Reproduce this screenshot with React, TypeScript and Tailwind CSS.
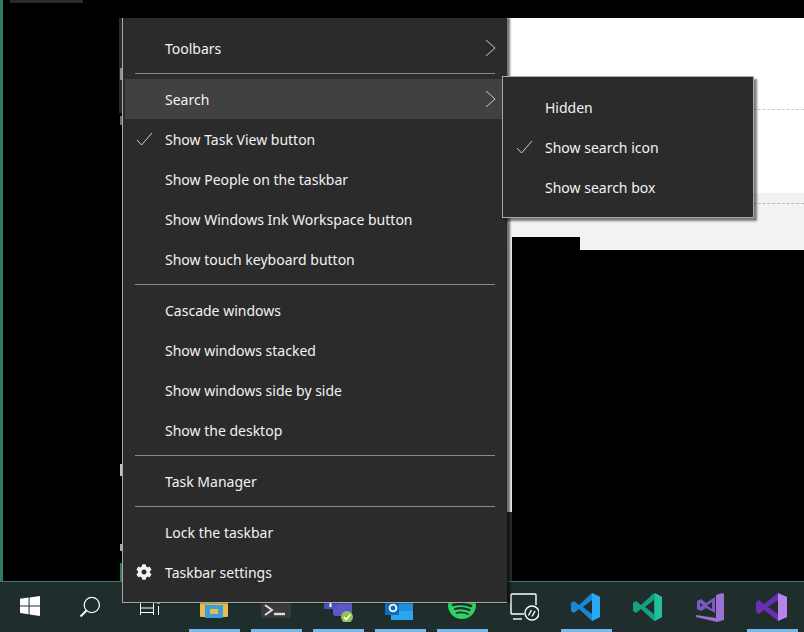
import { FaCog } from 'react-icons/fa';

const font = { fontFamily: '"Noto Sans", "Open Sans", sans-serif' };

interface RowProps {
  label: string;
  checked?: boolean;
  gear?: boolean;
  arrow?: boolean;
  active?: boolean;
}

const Row = ({ label, checked, gear, arrow, active }: RowProps) => (
  <div className={`flex h-10 items-center pr-[11px] text-[14px] text-[#f2f2f2] ${active ? 'ml-[2px] bg-[#414141] pl-[11px]' : 'pl-[13px]'}`}>
    <div className="flex w-[29px] items-center">
      {checked && (
        <svg width="17" height="14" viewBox="0 0 17 14" fill="none" stroke="#d0d0d0" strokeWidth="1">
          <path d="M1 8 5.5 13 16 1" />
        </svg>
      )}
      {gear && <FaCog size={16} className="text-[#f2f2f2]" />}
    </div>
    <span className="flex-1">{label}</span>
    {arrow && (
      <svg width="11" height="18" viewBox="0 0 11 18" fill="none" stroke="#cccccc" strokeWidth="1">
        <path d="M1 1 10 9 1 17" />
      </svg>
    )}
  </div>
);

const Sep = () => <div className="mx-[12px] my-[5px] h-px bg-[#8a8a8a]" />;

const TaskSlot = ({ children, bar, left = false }: { children?: React.ReactNode; bar?: boolean; left?: boolean }) => (
  <div className={`relative flex h-full items-center justify-center ${left ? 'w-[60px]' : 'w-[62px]'}`}>
    {children}
    {bar && <div className="absolute bottom-0 left-[6px] right-[5px] h-[3px] bg-[#76b9ed]" />}
  </div>
);

export default function App() {
  return (
    <div className="relative flex h-[632px] w-[804px] flex-col overflow-hidden bg-black" style={font}>
      <div className="flex h-[581px] flex-none">
        <div className="flex w-[507px] flex-none">
          <div className="w-[3px] bg-[#2f7a68]" />
          <div className="flex-1">
            <div className="ml-[7px] h-[3px] w-[73px] bg-[#2a2a2a]" />
          </div>
        </div>
        <div className="flex-1">
          <div className="h-[18px] bg-black" />
          <div className="h-[175px] bg-white pt-[91px]">
            <div className="ml-[246px] border-t border-dashed border-[#cccccc]" />
          </div>
          <div className="h-[57px] bg-[#f2f2f2] pt-[10px]">
            <div className="ml-[246px] border-t border-dashed border-[#bbbbbb]" />
            <div className="ml-[5px] mt-[33px] h-[13px] w-[68px] bg-black" />
          </div>
          <div className="h-[262px] border-l-[5px] border-[#eeeeee] bg-black" />
          <div className="h-[69px] border-l-[5px] border-[#2a2a2a] bg-black" />
        </div>
      </div>

      <div className="h-px flex-none bg-[#3f7a6a]" />

      <div className="flex h-[50px] flex-none items-center bg-[#1f2e2d]">
        <TaskSlot left>
          <svg width="20" height="20" viewBox="0 0 20 20" className="-mt-[2px]">
            <path d="M0 2.8 8.6 1.6V9.4H0Z M9.6 1.4 20 0V9.4H9.6Z M0 10.4H8.6V18.3L0 17.1Z M9.6 10.4H20V20L9.6 18.5Z" fill="#fff" />
          </svg>
        </TaskSlot>
        <TaskSlot left>
          <svg width="22" height="22" viewBox="0 0 22 22" fill="none" stroke="#fff">
            <circle cx="12.8" cy="9" r="7.6" strokeWidth="1.2" />
            <path d="M7.5 14.5 1.5 20.5" strokeWidth="1.8" />
          </svg>
        </TaskSlot>
        <div className="flex h-full w-[63px] items-center pl-[20px]">
          <svg width="20" height="14" viewBox="0 0 20 14" fill="none" stroke="#fff" className="mt-[1px]">
            <path d="M0.5 0v14M13.5 0v14M0.5 7H13.5M0.5 11.5H13.5M18.5 5v9" strokeWidth="1" />
            <rect x="17" y="0" width="3" height="3" fill="#bbb" stroke="none" />
          </svg>
        </div>
        <TaskSlot bar>
          <svg width="28" height="18" viewBox="0 0 28 18" className="mt-[4px]">
            <rect width="28" height="17" rx="1" fill="#e9bd4c" />
            <rect x="5" y="5" width="18" height="13" fill="#3b9fdc" />
            <rect x="10" y="9" width="8" height="5" fill="#e9bd4c" />
          </svg>
        </TaskSlot>
        <TaskSlot bar>
          <div className="mt-[3px] flex h-[18px] w-[30px] items-end rounded-[2px] bg-[#3a3a3a] pb-[2px] pl-[3px]">
            <svg width="22" height="12" viewBox="0 0 22 12" fill="none" stroke="#ddd">
              <path d="M1 1 8 6 1 11" strokeWidth="2" />
              <path d="M10 10H21" strokeWidth="2.4" />
            </svg>
          </div>
        </TaskSlot>
        <TaskSlot bar>
          <svg width="30" height="30" viewBox="0 0 30 30">
            <rect x="10" y="6" width="19" height="18" rx="3" fill="#5f56c8" />
            <rect x="1" y="2" width="13" height="15" rx="1" fill="#4b53bc" />
            <path d="M4 8H11M7.5 8V15" stroke="#fff" strokeWidth="2" />
            <circle cx="24" cy="25" r="6" fill="#92c353" />
            <path d="M21 25 23.2 27.5 27.5 22.5" stroke="#fff" strokeWidth="1.5" fill="none" />
          </svg>
        </TaskSlot>
        <TaskSlot bar>
          <svg width="30" height="28" viewBox="0 0 30 28">
            <rect x="6" y="2" width="22" height="25" rx="1" fill="#1f8fe0" />
            <rect x="6" y="18" width="22" height="9" fill="#2ba6ee" />
            <rect x="0" y="8" width="14" height="14" rx="1" fill="#0f6cbd" />
            <circle cx="8" cy="15" r="3.4" fill="none" stroke="#fff" strokeWidth="1.8" />
          </svg>
        </TaskSlot>
        <TaskSlot bar>
          <svg width="28" height="28" viewBox="0 0 28 28" fill="none" stroke="#1f2e2d" strokeLinecap="round" className="-mt-[4px]">
            <circle cx="14" cy="14" r="14" fill="#2ed463" stroke="none" />
            <path d="M5 14Q14 11.5 23 15" strokeWidth="2.6" />
            <path d="M7 18Q14 16 21.5 19" strokeWidth="2.2" />
            <path d="M8.5 22Q14 20.5 20 23" strokeWidth="1.8" />
          </svg>
        </TaskSlot>
        <TaskSlot>
          <svg width="30" height="28" viewBox="0 0 30 28" fill="none" stroke="#fff" strokeWidth="1.4">
            <path d="M15 21H3a1 1 0 0 1-1-1V2a1 1 0 0 1 1-1h23a1 1 0 0 1 1 1v10" />
            <path d="M4 26h9" />
            <circle cx="23" cy="20" r="7" fill="#1f2e2d" />
            <path d="M19.5 22.5l3-5.5M23 23.5l3-5.5" strokeWidth="1.4" />
          </svg>
        </TaskSlot>
        <TaskSlot bar>
          <svg width="30" height="30" viewBox="0 0 30 30">
            <path d="M21 1 29 5V25L21 29 8 17 3 21 0 19V11L3 9 8 13ZM21 8 12 15 21 22Z" fill="#1a86d6" fillRule="evenodd" />
            <path d="M21 1 29 5V25L21 29Z" fill="#2aa8f2" />
          </svg>
          <div className="absolute bottom-0 left-[46px] right-[5px] h-[3px] bg-[#5b8aaa]" />
        </TaskSlot>
        <TaskSlot>
          <svg width="30" height="30" viewBox="0 0 30 30">
            <path d="M21 1 29 5V25L21 29 8 17 3 21 0 19V11L3 9 8 13ZM21 8 12 15 21 22Z" fill="#14a083" fillRule="evenodd" />
            <path d="M22 1 29 5V25L22 29Z" fill="#22c09b" />
          </svg>
        </TaskSlot>
        <TaskSlot>
          <svg width="30" height="30" viewBox="0 0 30 30">
            <path d="M2 9 6 7 11 11 20 5V21L11 16 6 19 2 17ZM5 11V15L8 13ZM12 13.5 17 17V10Z" fill="#7e57c2" fillRule="evenodd" />
            <path d="M21 3 27 1 29 2V28L22 30 1 25V23L21 26Z" fill="#9a72d6" />
          </svg>
        </TaskSlot>
        <TaskSlot bar>
          <svg width="32" height="30" viewBox="0 0 32 30">
            <path d="M22 1 31 5V25L22 29 8 18 3 22 0 20V10L3 8 8 12ZM22 8 12 15 22 22Z" fill="#6a2fb0" fillRule="evenodd" />
            <path d="M22 1 31 5V25L22 29Z" fill="#b684ea" />
          </svg>
        </TaskSlot>
      </div>

      {/* remains of the window behind the menu */}
      <div className="absolute left-[119px] top-[18px] h-[95px] w-[3px] bg-[#2a2a2a]" />
      <div className="absolute left-[120px] top-[68px] h-[12px] w-[2px] bg-[#9c8e8e]" />
      <div className="absolute left-[120px] top-[116px] h-[9px] w-[2px] bg-[#6e6e6e]" />
      <div className="absolute left-[120px] top-[464px] h-[12px] w-[2px] bg-[#c8c0b8]" />
      <div className="absolute left-[120px] top-[544px] h-[7px] w-[2px] bg-[#a8a8a8]" />
      <div className="absolute left-[120px] top-[563px] h-[18px] w-[2px] bg-[#2f7a68]" />

      {/* context menu sits over the desktop and the taskbar */}
      <div className="absolute left-[122px] top-[18px] w-[385px] border-b border-l border-[#a8a8a8] bg-[#2b2b2b] pb-[10px] pt-[10px] shadow-[3px_0_2px_rgba(0,0,0,0.55)]">
        <Row label="Toolbars" arrow />
        <Sep />
        <Row label="Search" arrow active />
        <Row label="Show Task View button" checked />
        <Row label="Show People on the taskbar" />
        <Row label="Show Windows Ink Workspace button" />
        <Row label="Show touch keyboard button" />
        <Sep />
        <Row label="Cascade windows" />
        <Row label="Show windows stacked" />
        <Row label="Show windows side by side" />
        <Row label="Show the desktop" />
        <Sep />
        <Row label="Task Manager" />
        <Sep />
        <Row label="Lock the taskbar" />
        <Row label="Taskbar settings" gear />
      </div>

      <div className="absolute left-[502px] top-[76px] w-[252px] border border-[#a8a8a8] bg-[#2b2b2b] py-[10px] shadow-[3px_3px_2px_rgba(0,0,0,0.5)]">
        <Row label="Hidden" />
        <Row label="Show search icon" checked />
        <Row label="Show search box" />
      </div>
    </div>
  );
}
